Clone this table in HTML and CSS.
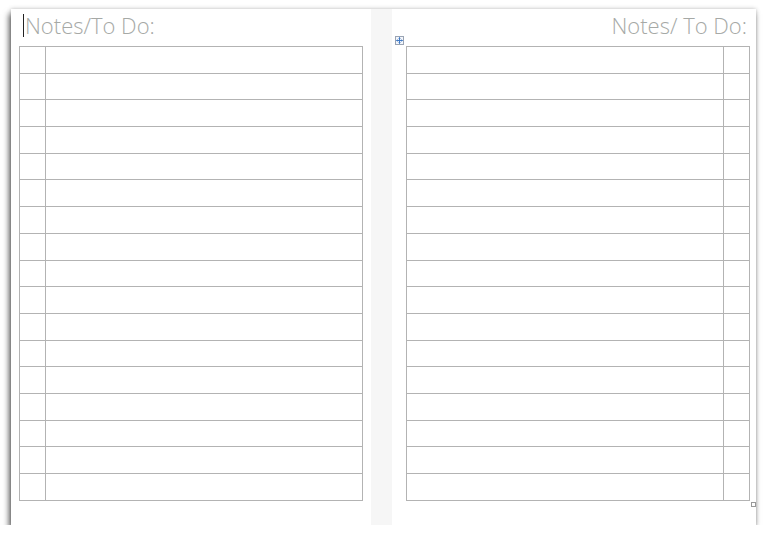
FILE: index.html
```html
<!DOCTYPE html>
<html lang="en">
<head>
  <meta charset="UTF-8" />
  <title>Notes / To Do</title>
  <link rel="stylesheet" href="styles.css">
</head>
<body>
  <div class="page">
    <div class="half left">
      <h2 class="title"><span class="cursor"></span>Notes/To Do:</h2>
      <table class="lines" id="leftTable"></table>
    </div>

    <div class="gutter"></div>

    <div class="half right">
      <h2 class="title">Notes/ To Do:</h2>
      <div class="table-wrap">
        <span class="move-handle">
          <svg width="9" height="9" viewBox="0 0 9 9">
            <rect x="0.5" y="0.5" width="8" height="8" fill="#f4f6fa" stroke="#9aa4b4"/>
            <path d="M4.5 1.5v6M1.5 4.5h6" stroke="#3f79c4" stroke-width="1"/>
            <path d="M3.5 2.5l1-1 1 1M3.5 6.5l1 1 1-1M2.5 3.5l-1 1 1 1M6.5 3.5l1 1-1 1" fill="none" stroke="#3f79c4" stroke-width="0.8"/>
          </svg>
        </span>
        <table class="lines" id="rightTable"></table>
        <span class="resize-handle"></span>
      </div>
    </div>
  </div>

  <script>
    // 17 ruled rows on each page, check box column on the outside edge
    function fill(id, boxFirst) {
      var t = document.getElementById(id);
      for (var i = 0; i < 17; i++) {
        var row = t.insertRow();
        var a = row.insertCell();
        var b = row.insertCell();
        (boxFirst ? a : b).className = 'box';
      }
    }
    fill('leftTable', true);
    fill('rightTable', false);
  </script>
</body>
</html>
```

FILE: styles.css
```css
:root {
  --line: #b3b3b3;
  --title: #a6a9a6;
}

body {
  margin: 0;
  background: #ffffff;
  font-family: 'Open Sans', sans-serif;
}

.page {
  margin: 9px 0 0 11px;
  width: 745px;
  height: 516px;
  background: #ffffff;
  display: flex;
  box-shadow: -2px 5px 6px rgba(0, 0, 0, 0.6), 0 0 4px rgba(0, 0, 0, 0.25);
}

.half {
  display: flex;
  flex-direction: column;
}

.left {
  width: 360px;
  padding-left: 8px;
  box-sizing: border-box;
}

.right {
  width: 364px;
  padding-left: 3px;
  box-sizing: border-box;
}

.gutter {
  width: 21px;
  background: #f6f6f6;
}

.title {
  margin: 0;
  height: 37px;
  font-size: 22px;
  font-weight: 300;
  line-height: 32px;
  color: var(--title);
  position: relative;
}

.left .title {
  padding-left: 6px;
}

.right .title {
  text-align: right;
  padding-right: 9px;
}

.cursor {
  position: absolute;
  left: 4px;
  top: 5px;
  width: 1px;
  height: 23px;
  background: #222;
}

.table-wrap {
  display: flex;
  align-items: flex-start;
  position: relative;
}

.move-handle {
  width: 11px;
  margin-top: -10px;
  line-height: 0;
}

.resize-handle {
  position: absolute;
  left: 356px;
  top: 456px;
  width: 3px;
  height: 3px;
  border: 1px solid #999;
  background: #fff;
}

.lines {
  border-collapse: collapse;
  width: 344px;
}

.lines td {
  border: 1px solid var(--line);
  height: 25.7px;
  padding: 0;
}

.lines td.box {
  width: 25px;
}
```
